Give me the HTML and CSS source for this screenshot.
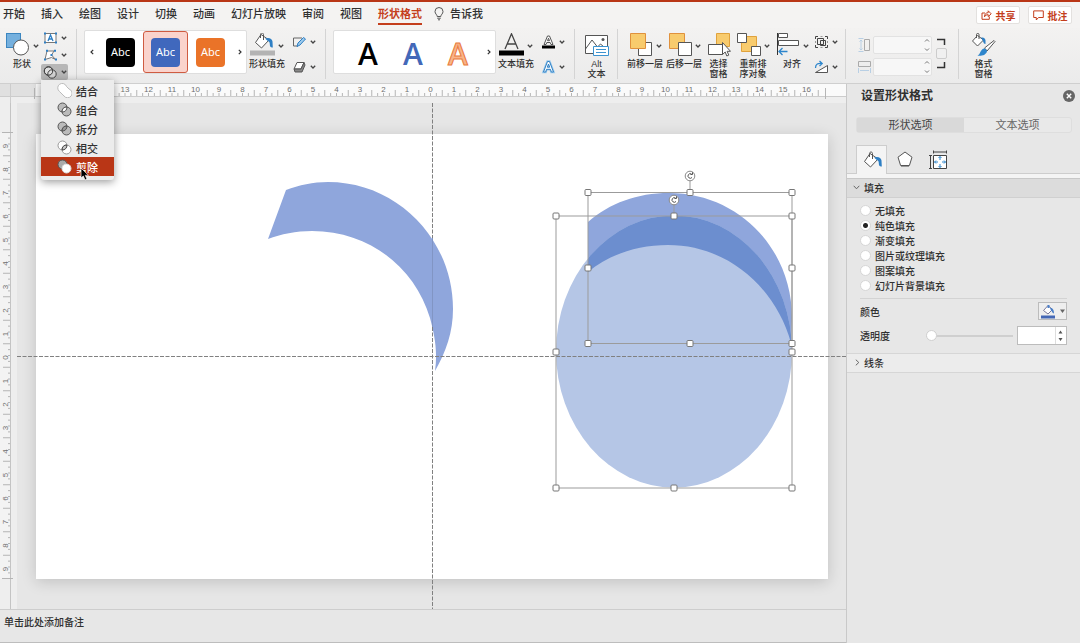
FILE: index.html
```html
<!DOCTYPE html>
<html lang="zh-CN">
<head>
<meta charset="utf-8">
<title>设置形状格式</title>
<link rel="stylesheet" href="styles.css">
</head>
<body>
<svg class="defs" aria-hidden="true">
  <symbol id="chev" viewBox="0 0 6 4"><path d="M.8 .8 3 3 5.200 .8" fill="none" stroke="#444" stroke-width="1.300"/></symbol>
  <symbol id="bucket" viewBox="0 0 24 18">
    <path d="M10 2.500 4.500 10.500l6 5.500 7.500-8z" fill="#fff" stroke="#555"/>
    <path d="M9.500 6V2.500C9.500.5 12.500.5 12.500 2.500V8" fill="none" stroke="#555"/>
    <path d="M14 6.500c4-1.500 7 0 7.500 3l.3 6c-2 .5-3-1-3-3 0-2-.3-3-2-3.500z" fill="#2e7fc4"/>
  </symbol>
</svg>
<div class="app">
  <header class="tabs">
    <nav class="tab-list">
      <a href="#">开始</a><a href="#">插入</a><a href="#">绘图</a><a href="#">设计</a><a href="#">切换</a><a href="#">动画</a><a href="#">幻灯片放映</a><a href="#">审阅</a><a href="#">视图</a><a href="#" class="current">形状格式</a>
      <a href="#" class="tell"><svg width="10" height="14" viewBox="0 0 10 14" fill="none" stroke="#555"><path d="M3.200 9.500C3.200 7.500 1 7 1 4.500a4 4 0 0 1 8 0C9 7 6.800 7.500 6.800 9.500zM3.200 11.200h3.600M4 12.800h2"/></svg>告诉我</a>
    </nav>
    <button class="pill"><svg width="11" height="10" viewBox="0 0 11 10" fill="none" stroke="#c43e1c"><path d="M4 3H1v6.300h7.300V6.500M3.500 6.800C3.500 4 5 2.700 7.200 2.700V.8l3 3-3 2.800V4.700C5.500 4.700 4.300 5.200 3.500 6.800z"/></svg>共享</button>
    <button class="pill"><svg width="11" height="11" viewBox="0 0 11 11" fill="none" stroke="#c43e1c"><path d="M.7.9h9.600v6.600H5.500L3.300 10V7.500H.7z"/></svg>批注</button>
  </header>

  <section class="ribbon">
    <div class="group g-shapes">
      <button class="tool"><span class="pic">
        <svg width="24" height="24" viewBox="0 0 24 24"><rect x=".5" y=".5" width="14" height="14" fill="#75b0de" stroke="#3c86c0"/><circle cx="15" cy="14.500" r="7.500" fill="#fff" stroke="#555"/></svg>
        <svg class="chev"><use href="#chev"/></svg></span><span>形状</span></button>
      <div class="minis three">
        <button class="mini" aria-label="文本框"><svg width="15" height="12" viewBox="0 0 15 12"><rect x="2" y="1.500" width="11" height="9" fill="#fff" stroke="#777"/><path d="M5 9l2.500-6L10 9M6 7h3" fill="none" stroke="#2e7fc4" stroke-width="1.300"/><path d="M1 .5h2v2H1zm11 0h2v2h-2zm-11 9h2v2H1zm11 0h2v2h-2z" fill="#2e7fc4"/></svg><svg class="chev"><use href="#chev"/></svg></button>
        <button class="mini" aria-label="编辑形状"><svg width="15" height="12" viewBox="0 0 15 12"><path d="M2 10.500 4 2h7L8.500 6l4 4.500-4-2z" fill="#fff" stroke="#777"/><path d="M3 .8h2v2H3zm8 0h2v2h-2zM1 9.500h2v2H1zm11 0h2v2h-2zM7.500 5h2v2h-2z" fill="#2e7fc4"/></svg><svg class="chev"><use href="#chev"/></svg></button>
        <button class="mini pressed" aria-label="合并形状"><svg width="15" height="13" viewBox="0 0 15 13" fill="none" stroke="#444"><circle cx="5.500" cy="5" r="4.200" fill="#ddd"/><circle cx="9" cy="8" r="4.200" fill="#ddd" fill-opacity=".7"/><circle cx="5.500" cy="5" r="4.200"/></svg><svg class="chev"><use href="#chev"/></svg></button>
      </div>
    </div>

    <div class="group g-style">
      <div class="gallery">
        <button class="page" aria-label="上一个"><svg width="4" height="6" viewBox="0 0 4 6"><path d="M3.200.8 1 3l2.200 2.200" fill="none" stroke="#333" stroke-width="1.200"/></svg></button>
        <button class="cell"><span class="swatch black">Abc</span></button>
        <button class="cell chosen"><span class="swatch blue">Abc</span></button>
        <button class="cell"><span class="swatch orange">Abc</span></button>
        <button class="page" aria-label="下一个"><svg width="4" height="6" viewBox="0 0 4 6"><path d="M.8.8 3 3 .8 5.200" fill="none" stroke="#333" stroke-width="1.200"/></svg></button>
      </div>
      <button class="tool"><span class="pic">
        <svg width="25" height="24" viewBox="0 0 25 24"><svg x="1" y="-2" width="24" height="18" viewBox="0 -1 24 18"><use href="#bucket" width="24" height="18"/></svg><path d="M0 17.500h25v5H0z" fill="#b3b3b3"/></svg>
        <svg class="chev"><use href="#chev"/></svg></span><span>形状填充</span></button>
      <div class="minis">
        <button class="mini" aria-label="形状轮廓"><svg width="15" height="12" viewBox="0 0 15 12"><path d="M10 2H1.500v8H6" fill="none" stroke="#666"/><path d="M5 10.500 6 7l5.500-5.500 2 1.500L8 9z" fill="#9ccaec" stroke="#2e7fc4"/></svg><svg class="chev"><use href="#chev"/></svg></button>
        <button class="mini" aria-label="形状效果"><svg width="15" height="12" viewBox="0 0 15 12"><path d="M5 1.500h7L9 8H2z" fill="#fff" stroke="#555"/><path d="M2 8h7l3-6.500 1 2.500-3 7H3z" fill="#888" stroke="#555"/></svg><svg class="chev"><use href="#chev"/></svg></button>
      </div>
    </div>

    <div class="group g-style">
      <div class="gallery">
        <span class="page"></span>
        <button class="cell art">A</button>
        <button class="cell art a-blue">A</button>
        <button class="cell art a-orange">A</button>
        <button class="page" aria-label="下一个"><svg width="4" height="6" viewBox="0 0 4 6"><path d="M.8.8 3 3 .8 5.200" fill="none" stroke="#333" stroke-width="1.200"/></svg></button>
      </div>
      <button class="tool"><span class="pic">
        <svg width="25" height="24" viewBox="0 0 25 24"><path d="M6 16 12.500.8 19 16M8.300 11h8.400" fill="none" stroke="#444" stroke-width="1.300"/><path d="M0 17.500h25v5H0z"/></svg>
        <svg class="chev"><use href="#chev"/></svg></span><span>文本填充</span></button>
      <div class="minis">
        <button class="mini" aria-label="文本轮廓"><svg width="15" height="14" viewBox="0 0 15 14"><path d="M3 9.500 6.500 1h2L12 9.500h-2L9.200 7.500H5.800L5 9.500zM6.500 5.700h2L7.500 3.200z" fill="#fff" stroke="#555"/><path d="M1 10.500h13v3H1z"/></svg><svg class="chev"><use href="#chev"/></svg></button>
        <button class="mini" aria-label="文本效果"><svg width="15" height="14" viewBox="0 0 15 14"><path d="M2.500 12 6.500 1.500h2L12.500 12h-2.200L9.500 9.300h-4L4.700 12zM6.300 7.200h2.400L7.500 4z" fill="#fff" stroke="#9ccaec" stroke-width="2.400"/><path d="M2.500 12 6.500 1.500h2L12.500 12h-2.200L9.500 9.300h-4L4.700 12zM6.300 7.200h2.400L7.500 4z" fill="#fff" stroke="#2e7fc4"/></svg><svg class="chev"><use href="#chev"/></svg></button>
      </div>
    </div>

    <div class="group g-alt">
      <button class="tool narrow"><span class="pic">
        <svg width="24" height="24" viewBox="0 0 24 24"><path d="M.5 2.500h22v18H.5z" fill="#fff" stroke="#555"/><path d="M.5 16 7 7l5.500 7 3-3 7 6" fill="none" stroke="#555"/><circle cx="18" cy="6.500" r="1.500" fill="#555"/><path d="M8.500 13.500h15v9h-15z" fill="#fff" stroke="#3c93d0"/><path d="M11 16.500h10M11 19.500h10" stroke="#3c93d0"/></svg></span><span>Alt<br>文本</span></button>
    </div>

    <div class="group g-arrange">
      <button class="tool"><span class="pic">
        <svg width="24" height="24" viewBox="0 0 24 24"><path d="M9.500 9.500h13v13h-13z" fill="#fff" stroke="#555"/><path d="M1.500.5h15v15h-15z" fill="#f8cb6d" stroke="#e0913c"/></svg>
        <svg class="chev"><use href="#chev"/></svg></span><span>前移一层</span></button>
      <button class="tool"><span class="pic">
        <svg width="24" height="24" viewBox="0 0 24 24"><path d="M1.500.5h15v15h-15z" fill="#f8cb6d" stroke="#e0913c"/><path d="M10.500 9.500h13v13h-13z" fill="#fff" stroke="#555"/></svg>
        <svg class="chev"><use href="#chev"/></svg></span><span>后移一层</span></button>
      <button class="tool narrow"><span class="pic">
        <svg width="24" height="24" viewBox="0 0 24 24"><path d="M9.500.5h13v13h-13z" fill="#f8cb6d" stroke="#e0a23c"/><path d="M1.500 11.500h14v10h-14z" fill="#fff" stroke="#555"/><path d="M15.500 9.500v12l2.700-2.500 1.600 4 2-.9-1.700-3.800h3.400z" fill="#fff" stroke="#555"/></svg></span><span>选择<br>窗格</span></button>
      <button class="tool"><span class="pic">
        <svg width="24" height="24" viewBox="0 0 24 24"><path d="M4.500 3.500h15v15h-15z" fill="#f8cb6d" stroke="#e0a23c"/><path d="M.5.500h9v9h-9zM14.500 13.500h9v9h-9z" fill="#fff" stroke="#555"/></svg>
        <svg class="chev"><use href="#chev"/></svg></span><span>重新排<br>序对象</span></button>
      <button class="tool"><span class="pic">
        <svg width="24" height="24" viewBox="0 0 24 24"><path d="M1.500 0v22" stroke="#333"/><path d="M2.500.5h9v4h-9zM2.500 7.500h20v5h-20z" fill="#fff" stroke="#555"/><path d="M11.500 18.500H3M6.500 15 3 18.500 6.500 22" fill="none" stroke="#2e86cc" stroke-width="1.300"/></svg>
        <svg class="chev"><use href="#chev"/></svg></span><span>对齐</span></button>
      <div class="minis">
        <button class="mini" aria-label="组合"><svg width="15" height="14" viewBox="0 0 15 14" fill="none" stroke="#444"><path d="M3.500 3.500h6v6h-6zM6.500 5.500h5v5h-5z"/><path d="M1.500 4V1.500H4M11 1.500h2.500V4M13.500 10v2.500H11M4 12.500H1.500V10"/><path d="M6.500 1.500h2M6.500 12.500h2M1.500 6v2M13.500 6v2" stroke="#999"/></svg><svg class="chev"><use href="#chev"/></svg></button>
        <button class="mini" aria-label="旋转"><svg width="15" height="14" viewBox="0 0 15 14" fill="none"><path d="M1.500 12.500h12v-7z" fill="#fff" stroke="#555"/><path d="M1.500 8C1.500 4 4 3 8 3.500M5.500 1 8.200 3.500 5.500 6" stroke="#2e86cc" stroke-width="1.300"/></svg><svg class="chev"><use href="#chev"/></svg></button>
      </div>
    </div>

    <div class="group g-size">
      <div class="dims">
        <label><svg width="13" height="14" viewBox="0 0 13 14" fill="none" stroke="#aaa"><path d="M6.500 1.500h5v11h-5z"/><path d="M.5.500h5M.5 13.500h5M3 2v10M1.500 3.500 3 2l1.500 1.500M1.500 10.500 3 12l1.500-1.500" stroke="#b8cfe4"/></svg><input type="text" aria-label="高度"><svg class="updown" viewBox="0 0 6 14"><path d="M1 3.500 3 1.500 5 3.500M1 10.500 3 12.500 5 10.500" fill="none" stroke="#777"/></svg></label>
        <label><svg width="13" height="14" viewBox="0 0 13 14" fill="none" stroke="#aaa"><path d="M.5 1.500h12v5H.5z"/><path d="M.5 8v5M12.500 8v5M2 10.500h9" stroke="#b8cfe4"/></svg><input type="text" aria-label="宽度"><svg class="updown" viewBox="0 0 6 14"><path d="M1 3.500 3 1.500 5 3.500M1 10.500 3 12.500 5 10.500" fill="none" stroke="#777"/></svg></label>
      </div>
      <div class="lock"><svg width="9" height="8" viewBox="0 0 9 8"><path d="M0 1.500h7.500V7" fill="none" stroke="#333" stroke-width="1.500"/></svg><input type="checkbox" aria-label="锁定纵横比"><svg width="9" height="8" viewBox="0 0 9 8"><path d="M0 6.500h7.500V1" fill="none" stroke="#333" stroke-width="1.500"/></svg></div>
    </div>

    <div class="group g-format">
      <button class="tool narrow"><span class="pic">
        <svg width="24" height="24" viewBox="0 0 24 24"><path d="M5.500 2.500.5 8l5 5 6-6z" fill="#fff" stroke="#555"/><path d="M4.500 5V1.500C4.500 0 7 0 7 1.500V6" fill="none" stroke="#555"/><path d="M9 4.500c3-.5 4.500 1 4.500 3V11c-1.500 0-2-1-2.500-3z" fill="#2e7fc4"/><path d="M12.500 15 22 7.500l1 1L15 18z" fill="#fff" stroke="#555"/><path d="M12 15.500c1.500 0 3 1.200 3 3-1.500 4-5 4.500-9.500 4.200 3-1.200 2.500-6 6.500-7.200z" fill="#2e86cc"/></svg></span><span>格式<br>窗格</span></button>
    </div>
  </section>

  <main class="work">
    <div class="editor">
      <div class="ruler-h"><svg id="rulerH" height="19"></svg></div>
      <div class="ruler-v"><svg id="rulerV" width="17"></svg></div>
      <div class="stage">
        <div class="slide"></div>
        <svg class="drawing" viewBox="17 103 829 506">
          <defs>
            <clipPath id="disc"><ellipse cx="674" cy="351.500" rx="118" ry="136"/></clipPath>
            <path id="arc" d="M588 222C610 203 637 193 669 193C738 193 792 248 792 318L791 343C776 288 728 245 668 245C638 245 610 254 588 272Z"/>
          </defs>
          <path d="M286 190C299 185 313 182 328 182C397 182 453 239 453 309C453 332 446 352 435 371C438 350 434 333 430 318C415 268 370 231 312 231C296 231 281 234 268 239Z" fill="#8fa6dc"/>
          <use href="#arc" fill="#8fa6dc"/>
          <ellipse cx="674" cy="351.500" rx="118" ry="136" fill="#b5c6e6"/>
          <use href="#arc" fill="#6c8ecf" clip-path="url(#disc)"/>
          <path d="M17 356.500H846M432.500 103V238M432.500 327V609" fill="none" stroke="#808080" stroke-dasharray="4 1.500"/>
          <path d="M432.500 238V327" stroke="#8195c4"/>
          <path d="M588 192.500H792V343.500H588zM556 216H792V488H556zM690 181v10M674 205v10" fill="none" stroke="#9b9b9b"/>
          <g id="handles" fill="#fff" stroke="#777"></g>
          <g fill="#fff" stroke="#888"><circle cx="690" cy="176" r="4.800"/><circle cx="674" cy="200" r="4.800"/></g>
          <path d="M692 177.500a2.300 2.300 0 1 1-.5-3.500M690.500 174.500h2v-2.200M676 201.500a2.300 2.300 0 1 1-.5-3.500M674.500 198.500h2v-2.200" fill="none" stroke="#555"/>
        </svg>
      </div>
      <div class="notes">单击此处添加备注</div>
    </div>

    <aside class="pane">
      <div class="pane-title"><h2>设置形状格式</h2><button aria-label="关闭"><svg width="12" height="12" viewBox="0 0 12 12"><circle cx="6" cy="6" r="6" fill="#666"/><path d="M3.800 3.800l4.400 4.400M8.200 3.800 3.800 8.200" stroke="#fff" stroke-width="1.400"/></svg></button></div>
      <div class="segments"><button class="on">形状选项</button><button>文本选项</button></div>
      <div class="icon-tabs">
        <button class="on" aria-label="填充与线条"><svg width="20" height="18" viewBox="2 0 20 18"><use href="#bucket" width="24" height="18"/></svg></button>
        <button aria-label="效果"><svg width="16" height="16" viewBox="0 0 16 16"><path d="M8 1 15 6.200 12.400 14.500H3.600L1 6.200z" fill="#fff" stroke="#555"/><path d="M4 15.500h8" stroke="#999"/></svg></button>
        <button aria-label="大小与属性"><svg width="18" height="19" viewBox="0 0 18 19" fill="none" stroke="#444"><path d="M4.500 5.500h13v13h-13z" fill="#fff"/><path d="M4.500.5v3M17.500.5v3M4.500 2h13M0 5.500h3M0 18.500h3M1.500 5.500v13"/><path d="M11 6.500v3.500M9.500 8 11 6.500 12.500 8M11 17.500V14M9.500 16l1.500 1.500 1.500-1.500M5.500 12H9M7 10.500 5.500 12 7 13.500M16.500 12H13M15 10.500l1.500 1.500-1.500 1.500" stroke="#2e86cc"/></svg></button>
      </div>
      <button class="section open"><svg width="7" height="5" viewBox="0 0 7 5"><path d="M.7.8 3.500 3.800 6.300.8" fill="none" stroke="#666"/></svg>填充</button>
      <div class="fill-body">
        <label><input type="radio" name="fill">无填充</label>
        <label><input type="radio" name="fill" checked>纯色填充</label>
        <label><input type="radio" name="fill">渐变填充</label>
        <label><input type="radio" name="fill">图片或纹理填充</label>
        <label><input type="radio" name="fill">图案填充</label>
        <label><input type="radio" name="fill">幻灯片背景填充</label>
        <div class="row first"><span>颜色</span><button class="color" aria-label="颜色"><svg width="15" height="15" viewBox="0 0 15 15"><path d="M7 1.500 2.500 6.500 7 10l4.500-4.500z" fill="#fff" stroke="#779"/><path d="M6.500 4V1h2v3M9 4c3 0 4 2 4 5.500C11 9 11 7 10 6.500z" fill="#4a7fc8"/><path d="M0 11.500h14v3H0z" fill="#4367b5"/></svg><svg width="5" height="4" viewBox="0 0 5 4"><path d="M0 .5h5L2.500 4z" fill="#666"/></svg></button></div>
        <div class="row"><label for="alpha">透明度</label><input type="range" id="alpha" value="0"><span class="spin"><input type="text" aria-label="透明度数值"><svg width="11" height="17" viewBox="0 0 11 17"><path d="M.5 0v17" stroke="#ddd"/><path d="M3.500 6.500h4L5.500 3.500zM3.500 11h4L5.500 14z" fill="#555"/></svg></span></div>
      </div>
      <button class="section closed"><svg width="5" height="7" viewBox="0 0 5 7"><path d="M.8.700 3.800 3.500.8 6.300" fill="none" stroke="#666"/></svg>线条</button>
    </aside>
  </main>

  <div class="menu" role="menu">
    <button role="menuitem"><svg width="15" height="15" viewBox="0 0 15 15"><path d="M2.500 8.500a4.500 4.500 0 1 1 7-5l2.500 2.500a4.500 4.500 0 1 1-5 7z" fill="#fff" stroke="#bbb"/></svg>结合</button>
    <button role="menuitem"><svg width="15" height="15" viewBox="0 0 15 15" stroke="#555"><circle cx="5.500" cy="5.500" r="4.500" fill="#bbb"/><circle cx="9.500" cy="9.500" r="4.500" fill="#bbb"/><path d="M9.900 5a4.500 4.500 0 0 1-4.800 5A4.500 4.500 0 0 1 9.900 5z" fill="#fff"/></svg>组合</button>
    <button role="menuitem"><svg width="15" height="15" viewBox="0 0 15 15" stroke="#555"><circle cx="5.500" cy="5.500" r="4.500" fill="#bbb"/><circle cx="9.500" cy="9.500" r="4.500" fill="#bbb"/><path d="M9.900 5a4.500 4.500 0 0 1-4.800 5A4.500 4.500 0 0 1 9.900 5z" fill="#999"/></svg>拆分</button>
    <button role="menuitem"><svg width="15" height="15" viewBox="0 0 15 15" stroke="#999"><circle cx="5.500" cy="5.500" r="4.500" fill="#fff"/><circle cx="9.500" cy="9.500" r="4.500" fill="#fff"/><path d="M9.900 5a4.500 4.500 0 0 1-4.800 5A4.500 4.500 0 0 1 9.900 5z" fill="#ccc" stroke="#444"/></svg>相交</button>
    <button role="menuitem" class="hot"><svg width="15" height="15" viewBox="0 0 15 15"><circle cx="5.500" cy="5.500" r="4.500" fill="#aaa" stroke="#555"/><circle cx="9.500" cy="9.500" r="4.500" fill="#fff" stroke="#ddd"/></svg>剪除</button>
    <svg class="cursor" width="10" height="14" viewBox="0 0 10 14"><path d="M1 1v10l2.300-2 1.700 4 2-.9-1.700-3.800h3.200z" fill="#000" stroke="#fff" stroke-width=".7"/></svg>
  </div>
</div>
<script src="script.js"></script>
</body>
</html>
```

FILE: styles.css
```css
* { box-sizing: border-box; }
body {
  margin: 0;
  font-family: "Liberation Sans", "Noto Sans CJK SC", sans-serif;
  font-size: 10px;
  color: #303030;
  background: #e7e7e7;
}
button, input { font: inherit; color: inherit; margin: 0; }
button { padding: 0; border: 0; background: none; }
svg { display: block; flex: none; }
.defs { display: none; }
.app {
  position: relative;
  min-height: 100vh;
  display: flex;
  flex-direction: column;
  border-top: 2px solid #b93616;
}

.tabs {
  display: flex;
  align-items: center;
  gap: 8px;
  height: 26px;
  padding: 0 8px 0 3px;
  background: #f4f3f2;
}
.tab-list { flex: 1; display: flex; gap: 16px; align-items: center; }
.tab-list a {
  color: #303030;
  text-decoration: none;
  font-size: 11px;
  font-weight: 500;
  line-height: 18px;
  border-bottom: 2px solid transparent;
  white-space: nowrap;
}
.tab-list .current { color: #c43e1c; font-weight: 700; border-color: #c43e1c; }
.tab-list .tell { display: flex; align-items: center; gap: 6px; margin-left: -4px; }
.pill {
  display: flex;
  align-items: center;
  justify-content: center;
  gap: 4px;
  width: 44px;
  height: 18px;
  background: #fff;
  border: 1px solid #e3e1df;
  border-radius: 2px;
  color: #c43e1c;
  font-weight: 700;
}

.ribbon {
  display: flex;
  height: 56px;
  background: linear-gradient(#f3f2f1, #ebebeb);
  border-bottom: 1px solid #cfcfcf;
}
.group { position: relative; display: flex; align-items: flex-start; }
.group:not(:last-child)::after {
  content: "";
  position: absolute;
  right: 0;
  top: 1px;
  bottom: 4px;
  border-right: 1px solid #d4d4d4;
}
.g-shapes { padding: 0 9px 0 5px; gap: 2px; }
.g-style { padding: 0 9px 0 7px; }
.g-alt { padding: 0 9px 0 9px; }
.g-arrange { padding: 0 7px 0 10px; gap: 5px; }
.g-arrange .minis { margin-left: -2px; }
.g-size { padding: 0 12px 0 12px; gap: 4px; }
.g-format { padding-left: 12px; }
.tool {
  display: flex;
  flex-direction: column;
  align-items: center;
  width: 34px;
  padding-top: 5px;
  font-size: 9px;
  line-height: 10px;
  font-weight: 500;
  white-space: nowrap;
}
.tool.narrow { width: 25px; }
.pic { display: flex; align-items: center; gap: 3px; height: 26px; }
.pic > svg:first-child { margin-bottom: 2px; }
.chev { width: 6px; height: 4px; }
.minis { display: flex; flex-direction: column; gap: 9px; padding-top: 6px; }
.minis.three { gap: 1px; padding-top: 2px; }
.mini { display: flex; align-items: center; justify-content: center; gap: 3px; width: 27px; height: 16px; }
.mini.pressed { background: #b7b7b7; border-radius: 2px; }
.gallery {
  display: flex;
  align-items: stretch;
  width: 163px;
  height: 44px;
  margin: 2px 3px 0 0;
  background: #fff;
  border: 1px solid #dedede;
  border-radius: 2px;
}
.g-style .minis { margin-left: 6px; }
.page { display: flex; align-items: center; justify-content: center; width: 13px; }
.cell { flex: 1; display: flex; align-items: center; justify-content: center; border: 1px solid transparent; border-radius: 3px; }
.cell.chosen { background: #fad3cc; border-color: #cf5b41; }
.swatch {
  width: 29px;
  height: 29px;
  border-radius: 4px;
  color: #fff;
  font: 11px/27px "Noto Sans", sans-serif;
}
.black { background: #000; }
.blue { background: #4068bd; }
.orange { background: #ea7328; }
.art { padding: 3px 3px 0 0; font: 600 30px/40px "Open Sans", sans-serif; color: #000; }
.art.a-blue { color: #4368b8; }
.art.a-orange { color: #f8b48a; -webkit-text-stroke: 1px #e97a3c; }
.dims { display: flex; flex-direction: column; gap: 4px; padding-top: 8px; }
.dims label { position: relative; display: flex; align-items: center; gap: 2px; }
.dims input { width: 59px; height: 18px; border: 1px solid #e2e2e2; border-radius: 2px; background: #f7f7f7; }
.updown { position: absolute; right: 2px; width: 6px; height: 14px; }
.lock { display: flex; flex-direction: column; align-items: center; gap: 2px; padding-top: 10px; }
.lock input { appearance: none; width: 11px; height: 11px; border: 1px solid #ccc; border-radius: 2px; background: #f0f0f0; }

.work { flex: 1; display: grid; grid-template-columns: 1fr 234px; }
.editor {
  display: grid;
  grid-template: 19px 1fr 34px / 17px 1fr;
  min-width: 0;
}
.ruler-h { grid-column: 1 / -1; background: #eee; }
.ruler-h svg { width: 100%; }
.ruler-v { background: #eee; min-height: 0; }
.ruler-v svg { height: 100%; }
.ruler-h text, .ruler-v text { font: 8px "Liberation Sans", sans-serif; fill: #707070; text-anchor: middle; }
.stage { position: relative; padding: 31px 18px 30px 19px; display: flex; background: #e6e6e6; }
.slide { flex: 1; background: #fff; box-shadow: 0 3px 14px rgba(0, 0, 0, .16); }
.drawing { position: absolute; inset: 0; width: 100%; height: 100%; }
.notes {
  grid-column: 1 / -1;
  padding: 5px 4px;
  font-weight: 500;
  line-height: 16px;
  border-top: 1px solid #cdcdcd;
  border-bottom: 1px solid #bdbdbd;
  background: #e7e7e7;
}

.pane { border-left: 1px solid #c9c9c9; background: #e7e7e7; }
.pane-title { display: flex; align-items: center; justify-content: space-between; height: 23px; padding: 0 5px 0 14px; }
.pane-title h2 { margin: 0; font-size: 12px; line-height: 20px; font-weight: 700; }
.segments { display: flex; height: 16px; margin: 10px 8px 0 9px; border: 1px solid #dedede; border-radius: 3px; background: #e9e9e9; }
.segments button { flex: 1; font-size: 11px; line-height: 14px; color: #666; }
.segments .on { background: #d9d9d9; color: #444; }
.icon-tabs {
  display: flex;
  height: 33px;
  margin-top: 12px;
  padding-left: 9px;
  gap: 2px;
  border-bottom: 4px solid #f4f4f4;
  background: linear-gradient(#cdcdcd, #cdcdcd) 0 28px / 100% 1px no-repeat;
}
.icon-tabs button { display: flex; align-items: center; justify-content: center; width: 31px; height: 29px; border-bottom: 1px solid #cdcdcd; }
.icon-tabs .on { background: #f4f4f4; border: 1px solid #cdcdcd; border-bottom: 0; }
.section {
  display: flex;
  align-items: center;
  gap: 4px;
  width: 100%;
  height: 20px;
  padding: 0 0 1px 6px;
  font-size: 10px;
  font-weight: 500;
  border-top: 1px solid #c8c8c8;
  border-bottom: 1px solid #d0d0d0;
}
.section.open { background: #dcdcdc; }
.section.closed { background: #ececec; padding-left: 8px; border-color: #d6d6d6; }
.fill-body { padding: 5px 13px 6px 13px; }
.fill-body > label { display: flex; align-items: center; gap: 4px; height: 15px; font-weight: 500; }
.fill-body input[type="radio"] { appearance: none; width: 11px; height: 11px; border-radius: 50%; background: #fff; border: 1px solid #d6d6d6; }
.fill-body input[type="radio"]:checked { background: radial-gradient(circle, #222 2px, #fff 3px); }
.row { display: flex; align-items: center; height: 24px; font-weight: 500; }
.row.first { justify-content: space-between; margin-top: 5px; border-top: 1px solid #d3d3d3; height: 25px; }
.color { display: flex; align-items: center; justify-content: center; gap: 4px; width: 29px; height: 18px; border: 1px solid #bcbcbc; background: #eee; }
.row input[type="range"] { appearance: none; flex: 1; min-width: 0; height: 11px; margin: 0 4px 0 36px; background: linear-gradient(#cfcfcf, #cfcfcf) 0 5px / 100% 2px no-repeat; }
.row input[type="range"]::-webkit-slider-thumb { appearance: none; width: 11px; height: 11px; border-radius: 50%; background: #fff; border: 1px solid #d0d0d0; }
.spin { display: flex; width: 50px; height: 19px; border: 1px solid #bcbcbc; background: #fff; }
.spin input { flex: 1; min-width: 0; border: 0; background: none; }

.menu {
  position: absolute;
  left: 41px;
  top: 78px;
  width: 73px;
  padding: 1px 0 4px;
  background: #ececec;
  border-radius: 0 0 3px 3px;
  box-shadow: 0 2px 8px rgba(0, 0, 0, .4);
}
.menu button { display: flex; align-items: center; gap: 4px; width: 100%; height: 19px; padding-left: 16px; font-size: 11px; font-weight: 500; }
.menu .hot { background: #b93616; color: #fff; }
.cursor { position: absolute; left: 39px; top: 87px; }
```

FILE: script.js
```js
const NS = "http://www.w3.org/2000/svg";
const UNIT = 23.5;

function add(parent, tag, attrs, text) {
  const el = document.createElementNS(NS, tag);
  for (const k in attrs) el.setAttribute(k, attrs[k]);
  if (text !== undefined) el.textContent = text;
  parent.appendChild(el);
}

// Horizontal ruler: origin at the slide centre, one label per centimetre.
// Labels under the open menu are left out.
const h = document.getElementById("rulerH");
add(h, "rect", { x: 0, y: 0, width: 36, height: 12, fill: "#e0e0e0" });
add(h, "rect", { x: 36, y: 0, width: 810, height: 12, fill: "#fafafa" });
add(h, "path", { d: "M0 12.5H846M10.500 0V19", stroke: "#cccccc" });
let d = "M34.500 4V15M825.500 4V15";
for (let q = -66; q <= 66; q++) {
  const x = 430.5 + q * UNIT / 4;
  d += `M${x} 12V${Math.abs(q) % 4 === 2 ? 6 : 9}`;
}
add(h, "path", { d, stroke: "#b5b5b5" });
for (let n = -13; n <= 16; n++) add(h, "text", { x: 430.5 + n * UNIT, y: 8 }, Math.abs(n));

// Vertical ruler, labels turned a quarter to the left.
const v = document.getElementById("rulerV");
add(v, "rect", { x: 0, y: 30, width: 10, height: 446, fill: "#f3f3f3" });
add(v, "path", { d: "M10.500 0V506", stroke: "#c4c4c4" });
d = "M2 29.500H13M2 475.500H13";
for (let q = -37; q <= 37; q++) {
  const y = 252.5 + q * UNIT / 4;
  d += `M${Math.abs(q) % 4 === 2 ? 3 : 8} ${y}H10`;
}
add(v, "path", { d, stroke: "#b5b5b5" });
for (let n = -9; n <= 9; n++) {
  const y = 254.5 + n * UNIT;
  add(v, "text", { x: 8, y, transform: `rotate(-90 8 ${y})` }, Math.abs(n));
}

// Eight resize handles round each selected shape.
const g = document.getElementById("handles");
for (const [xs, ys] of [[[588, 690, 792], [192.5, 268, 343.5]], [[556, 674, 792], [216, 352, 488]]]) {
  for (const x of xs) for (const y of ys) {
    if (x === xs[1] && y === ys[1]) continue;
    add(g, "rect", { x: x - 3, y: y - 3, width: 6, height: 6, rx: 1 });
  }
}
```
